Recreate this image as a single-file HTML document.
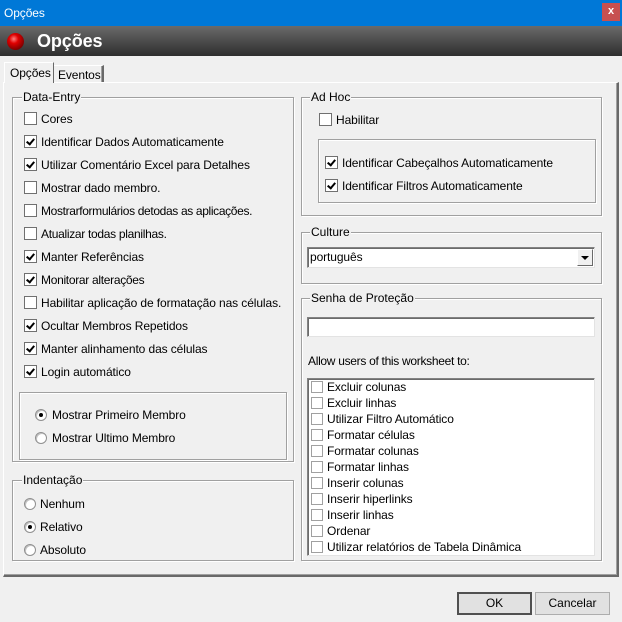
<!DOCTYPE html>
<html><head><meta charset="utf-8">
<style>
*{box-sizing:border-box;margin:0;padding:0}
body{width:622px;height:622px;background:#f0f0f0;font-family:"Liberation Sans",sans-serif;font-size:12px;color:#000;position:relative;overflow:hidden}
.a{position:absolute}
.t{position:absolute;white-space:nowrap;line-height:14px;letter-spacing:-0.1px}
.gb{position:absolute;border:1px solid #a0a0a0;box-shadow:inset 1px 1px 0 #fff,1px 1px 0 #fff}
.lg{position:absolute;background:#f0f0f0;padding:0 1px;line-height:14px;white-space:nowrap}
.cb{position:absolute;width:13px;height:13px;border:1px solid #707070;background:#fff}
.cb.k::after{content:"";position:absolute;left:3px;top:1px;width:3px;height:6px;border:solid #000;border-width:0 2px 2px 0;transform:rotate(40deg)}
.cb.g{border-color:#a0a0a0;width:12px;height:12px}
.rb{position:absolute;width:12px;height:12px;border-radius:50%;border:1px solid #909090;background:#fff;box-shadow:inset 1px 1px 0 #c0c0c0}
.rb.k::after{content:"";position:absolute;left:3px;top:3px;width:4px;height:4px;border-radius:50%;background:#000}
.inset{position:absolute;border:1px solid #828282;border-right-color:#e3e3e3;border-bottom-color:#e3e3e3;background:#fff;box-shadow:inset 1px 1px 0 #6b6b6b}
.btn{position:absolute;border:1px solid #adadad;background:#e1e1e1;text-align:center;line-height:20px}
</style></head><body>
<div class="a" style="left:0;top:0;width:622px;height:26px;background:#0078d7"></div>
<div class="t" style="left:4px;top:6px;color:#fff;font-size:12px">Opções</div>
<div class="a" style="left:602px;top:3px;width:18px;height:18px;background:#c75050;color:#fff;font-size:11px;font-weight:bold;text-align:center;line-height:17px">x</div>
<div class="a" style="left:0;top:26px;width:622px;height:30px;background:linear-gradient(#6a6a6a,#2e2e2e)"></div>
<div class="a" style="left:7px;top:33px;width:17px;height:17px;border-radius:50%;background:radial-gradient(circle at 40% 35%,#ff8080 0,#e00000 30%,#700000 80%,#200 100%)"></div>
<div class="t" style="left:37px;top:31px;color:#fff;font-size:18px;font-weight:bold;line-height:20px">Opções</div>

<div class="a" style="left:3px;top:82px;width:616px;height:495px;border:1px solid #fff;border-right:2px solid #696969;border-bottom:2px solid #696969;box-shadow:inset -1px -1px 0 #a0a0a0"></div>
<div class="a" style="left:4px;top:62px;width:50px;height:21px;background:#f0f0f0;border:1px solid #fff;border-bottom:none;border-right:1px solid #696969"></div>
<div class="t" style="left:10px;top:66px">Opções</div>
<div class="a" style="left:54px;top:65px;width:50px;height:17px;border-top:1px solid #fff;border-right:2px solid #696969;box-shadow:inset -1px 0 0 #a0a0a0"></div>
<div class="t" style="left:58px;top:68px">Eventos</div>

<div class="gb" style="left:12px;top:97px;width:282px;height:365px"></div>
<div class="lg" style="left:22px;top:90px">Data-Entry</div>
<div class="cb" style="left:24px;top:112px"></div><div class="t" style="left:41px;top:112px">Cores</div>
<div class="cb k" style="left:24px;top:135px"></div><div class="t" style="left:41px;top:135px">Identificar Dados Automaticamente</div>
<div class="cb k" style="left:24px;top:158px"></div><div class="t" style="left:41px;top:158px">Utilizar Comentário Excel para Detalhes</div>
<div class="cb" style="left:24px;top:181px"></div><div class="t" style="left:41px;top:181px">Mostrar dado membro.</div>
<div class="cb" style="left:24px;top:204px"></div><div class="t" style="left:41px;top:204px;letter-spacing:-0.35px">Mostrarformulários detodas as aplicações.</div>
<div class="cb" style="left:24px;top:227px"></div><div class="t" style="left:41px;top:227px;letter-spacing:-0.3px">Atualizar todas planilhas.</div>
<div class="cb k" style="left:24px;top:250px"></div><div class="t" style="left:41px;top:250px">Manter Referências</div>
<div class="cb k" style="left:24px;top:273px"></div><div class="t" style="left:41px;top:273px;letter-spacing:-0.3px">Monitorar alterações</div>
<div class="cb" style="left:24px;top:296px"></div><div class="t" style="left:41px;top:296px">Habilitar aplicação de formatação nas células.</div>
<div class="cb k" style="left:24px;top:319px"></div><div class="t" style="left:41px;top:319px">Ocultar Membros Repetidos</div>
<div class="cb k" style="left:24px;top:342px"></div><div class="t" style="left:41px;top:342px">Manter alinhamento das células</div>
<div class="cb k" style="left:24px;top:365px"></div><div class="t" style="left:41px;top:365px">Login automático</div>
<div class="gb" style="left:19px;top:392px;width:268px;height:68px"></div>
<div class="rb k" style="left:35px;top:409px"></div><div class="t" style="left:52px;top:408px">Mostrar Primeiro Membro</div>
<div class="rb" style="left:35px;top:432px"></div><div class="t" style="left:52px;top:431px">Mostrar Ultimo Membro</div>

<div class="gb" style="left:12px;top:480px;width:282px;height:81px"></div>
<div class="lg" style="left:22px;top:473px">Indentação</div>
<div class="rb" style="left:24px;top:498px"></div><div class="t" style="left:40px;top:497px">Nenhum</div>
<div class="rb k" style="left:24px;top:521px"></div><div class="t" style="left:40px;top:520px">Relativo</div>
<div class="rb" style="left:24px;top:544px"></div><div class="t" style="left:40px;top:543px">Absoluto</div>

<div class="gb" style="left:301px;top:97px;width:301px;height:119px"></div>
<div class="lg" style="left:310px;top:90px">Ad Hoc</div>
<div class="cb" style="left:319px;top:113px"></div><div class="t" style="left:336px;top:113px">Habilitar</div>
<div class="gb" style="left:318px;top:139px;width:278px;height:64px"></div>
<div class="cb k" style="left:325px;top:156px"></div><div class="t" style="left:342px;top:156px">Identificar Cabeçalhos Automaticamente</div>
<div class="cb k" style="left:325px;top:179px"></div><div class="t" style="left:342px;top:179px">Identificar Filtros Automaticamente</div>

<div class="gb" style="left:301px;top:232px;width:301px;height:52px"></div>
<div class="lg" style="left:310px;top:225px">Culture</div>
<div class="inset" style="left:307px;top:247px;width:288px;height:21px"></div>
<div class="t" style="left:310px;top:250px">português</div>
<div class="a" style="left:577px;top:249px;width:16px;height:17px;background:#f0f0f0;border:1px solid #fff;border-right-color:#696969;border-bottom-color:#696969"></div>
<div class="a" style="left:581px;top:256px;width:0;height:0;border-left:4px solid transparent;border-right:4px solid transparent;border-top:4px solid #000"></div>

<div class="gb" style="left:301px;top:298px;width:301px;height:263px"></div>
<div class="lg" style="left:310px;top:291px">Senha de Proteção</div>
<div class="inset" style="left:307px;top:317px;width:288px;height:20px"></div>
<div class="t" style="left:308px;top:354px;letter-spacing:-0.3px">Allow users of this worksheet to:</div>
<div class="inset" style="left:307px;top:378px;width:288px;height:178px"></div>
<div class="cb g" style="left:311px;top:381px"></div><div class="t" style="left:327px;top:380px">Excluir colunas</div>
<div class="cb g" style="left:311px;top:397px"></div><div class="t" style="left:327px;top:396px">Excluir linhas</div>
<div class="cb g" style="left:311px;top:413px"></div><div class="t" style="left:327px;top:412px">Utilizar Filtro Automático</div>
<div class="cb g" style="left:311px;top:429px"></div><div class="t" style="left:327px;top:428px">Formatar células</div>
<div class="cb g" style="left:311px;top:445px"></div><div class="t" style="left:327px;top:444px">Formatar colunas</div>
<div class="cb g" style="left:311px;top:461px"></div><div class="t" style="left:327px;top:460px">Formatar linhas</div>
<div class="cb g" style="left:311px;top:477px"></div><div class="t" style="left:327px;top:476px">Inserir colunas</div>
<div class="cb g" style="left:311px;top:493px"></div><div class="t" style="left:327px;top:492px">Inserir hiperlinks</div>
<div class="cb g" style="left:311px;top:509px"></div><div class="t" style="left:327px;top:508px">Inserir linhas</div>
<div class="cb g" style="left:311px;top:525px"></div><div class="t" style="left:327px;top:524px">Ordenar</div>
<div class="cb g" style="left:311px;top:541px"></div><div class="t" style="left:327px;top:540px">Utilizar relatórios de Tabela Dinâmica</div>

<div class="btn" style="left:457px;top:592px;width:75px;height:23px;border:2px solid #505050;line-height:19px">OK</div>
<div class="btn" style="left:535px;top:592px;width:75px;height:23px;line-height:21px">Cancelar</div>
</body></html>
